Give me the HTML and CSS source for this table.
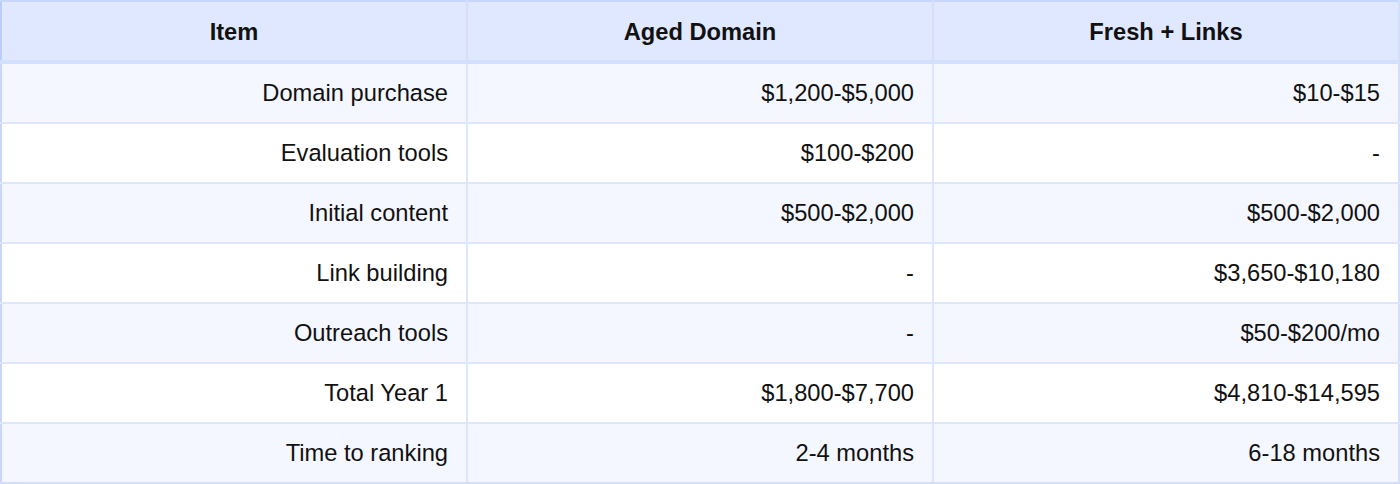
FILE: index.html
```html
<!DOCTYPE html>
<html>
<head>
<meta charset="utf-8">
<link rel="stylesheet" href="styles.css">
</head>
<body>
<table class="cmp">
  <thead>
    <tr><th>Item</th><th>Aged Domain</th><th>Fresh + Links</th></tr>
  </thead>
  <tbody>
    <tr><td>Domain purchase</td><td>$1,200-$5,000</td><td>$10-$15</td></tr>
    <tr><td>Evaluation tools</td><td>$100-$200</td><td>-</td></tr>
    <tr><td>Initial content</td><td>$500-$2,000</td><td>$500-$2,000</td></tr>
    <tr><td>Link building</td><td>-</td><td>$3,650-$10,180</td></tr>
    <tr><td>Outreach tools</td><td>-</td><td>$50-$200/mo</td></tr>
    <tr><td>Total Year 1</td><td>$1,800-$7,700</td><td>$4,810-$14,595</td></tr>
    <tr><td>Time to ranking</td><td>2-4 months</td><td>6-18 months</td></tr>
  </tbody>
</table>
</body>
</html>
```
FILE: styles.css
```css
html, body {
  margin: 0;
  padding: 0;
  background: #ffffff;
}
.cmp {
  width: 1400px;
  border-collapse: collapse;
  table-layout: fixed;
  font-family: "Liberation Sans", Arial, sans-serif;
  font-size: 23.7px;
  color: #111111;
  border: 2px solid #c6d6fc;
}
.cmp th {
  background: #dfe8fe;
  font-weight: bold;
  text-align: center;
  height: 56px;
  padding: 2px 18px 0;
  border: 2px solid #d3e0fd;
  border-top-color: #c6d6fc;
  border-bottom-width: 4px;
}
.cmp th:first-child { border-left-color: #b9cdfb; }
.cmp td {
  text-align: right;
  height: 58px;
  padding: 0 18px;
  border: 2px solid #dde6fc;
}
.cmp td:first-child { border-left-color: #c6d6fc; }
.cmp td:last-child { border-right-color: #d3e0fd; }
.cmp tbody tr:nth-child(odd) td { background: #f4f7ff; }
.cmp tbody tr:nth-child(even) td { background: #ffffff; }
.cmp tbody tr:last-child td { border-bottom-color: #d3e0fd; }
```
